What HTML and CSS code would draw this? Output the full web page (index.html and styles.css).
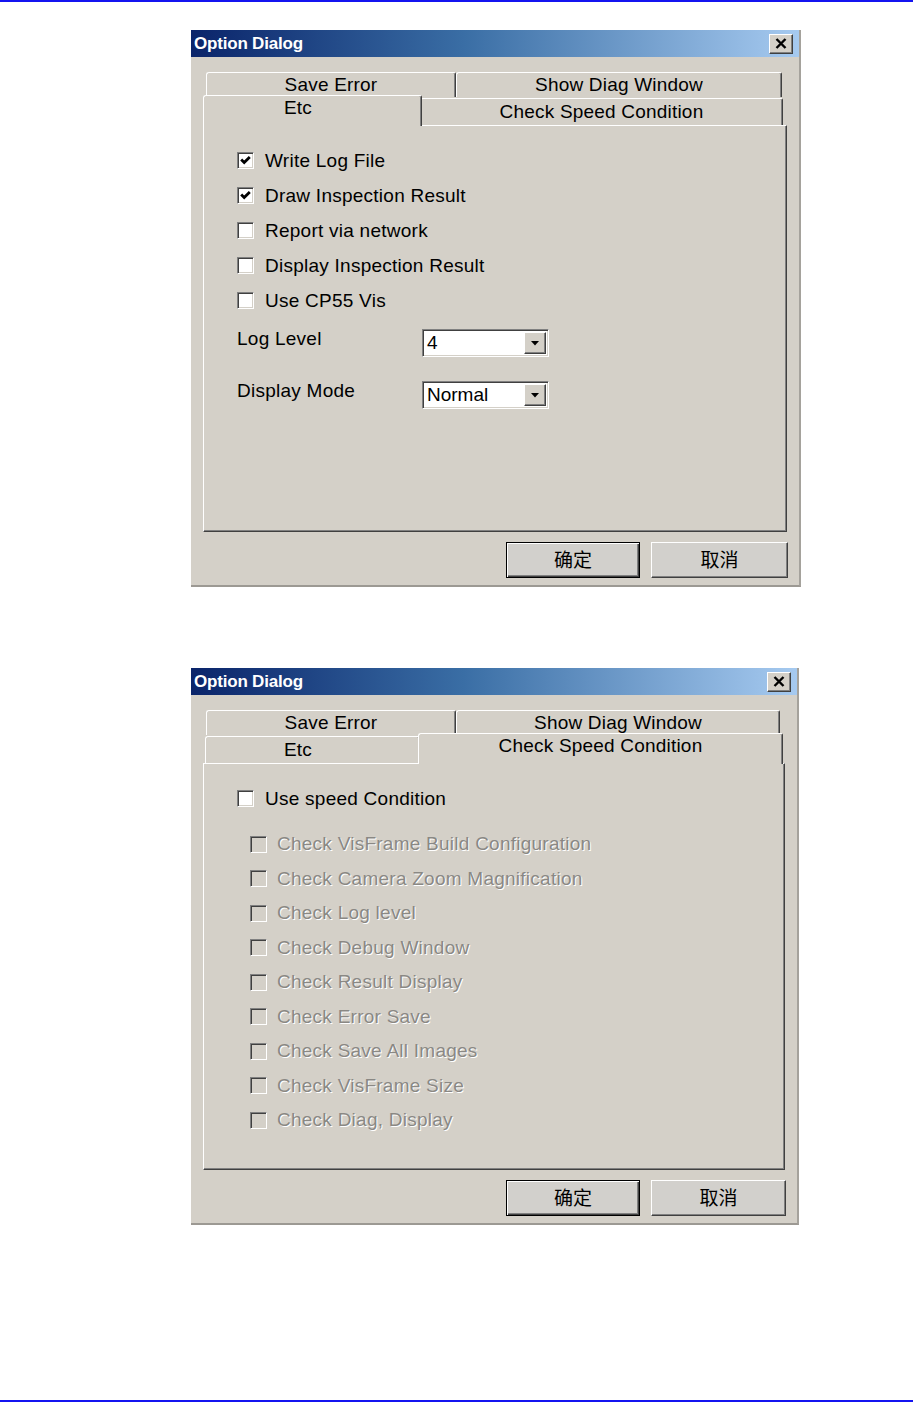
FILE: index.html
```html
<!DOCTYPE html>
<html lang="en">
<head>
<meta charset="utf-8">
<title>Option Dialog</title>
<link rel="stylesheet" href="styles.css">
</head>
<body>
<div class="rule"></div>
<main class="page">
  <section class="dialog">
    <header class="titlebar">
      <span class="title">Option Dialog</span>
      <span class="close"><svg width="12" height="11" viewBox="0 0 12 11"><path d="M1.5 1 L10.5 10 M10.5 1 L1.5 10" stroke="#000" stroke-width="2.4" fill="none"/></svg></span>
    </header>
    <div class="body">
      <div class="tabs">
        <div class="tabrow tabrow--back">
          <div class="tab tab--save">Save Error</div>
          <div class="tab tab--grow">Show Diag Window</div>
        </div>
        <div class="tabrow tabrow--front">
          <div class="tab tab--etc tab--active">Etc</div>
          <div class="tab tab--grow">Check Speed Condition</div>
        </div>
      </div>
      <div class="panel">
        <div class="check"><span class="cb"><svg width="15" height="15" viewBox="0 0 15 15"><path d="M3.2 6.6 L6.2 9.6 L11.8 4" stroke="#000" stroke-width="2.8" fill="none"/></svg></span><span>Write Log File</span></div>
        <div class="check"><span class="cb"><svg width="15" height="15" viewBox="0 0 15 15"><path d="M3.2 6.6 L6.2 9.6 L11.8 4" stroke="#000" stroke-width="2.8" fill="none"/></svg></span><span>Draw Inspection Result</span></div>
        <div class="check"><span class="cb"></span><span>Report via network</span></div>
        <div class="check"><span class="cb"></span><span>Display Inspection Result</span></div>
        <div class="check"><span class="cb"></span><span>Use CP55 Vis</span></div>
        <div class="form">
          <span class="form-label">Log Level</span>
          <div class="combo"><span class="combo-value">4</span><span class="combo-btn"><svg width="8" height="5" viewBox="0 0 8 5"><path d="M0 0 H8 L4 4.5 Z" fill="#000"/></svg></span></div>
          <span class="form-label">Display Mode</span>
          <div class="combo"><span class="combo-value">Normal</span><span class="combo-btn"><svg width="8" height="5" viewBox="0 0 8 5"><path d="M0 0 H8 L4 4.5 Z" fill="#000"/></svg></span></div>
        </div>
      </div>
      <div class="actions">
        <button class="btn btn--default">确定</button>
        <button class="btn btn--cancel">取消</button>
      </div>
    </div>
  </section>

  <section class="dialog dialog--second">
    <header class="titlebar">
      <span class="title">Option Dialog</span>
      <span class="close"><svg width="12" height="11" viewBox="0 0 12 11"><path d="M1.5 1 L10.5 10 M10.5 1 L1.5 10" stroke="#000" stroke-width="2.4" fill="none"/></svg></span>
    </header>
    <div class="body">
      <div class="tabs">
        <div class="tabrow tabrow--back">
          <div class="tab tab--save">Save Error</div>
          <div class="tab tab--grow">Show Diag Window</div>
        </div>
        <div class="tabrow tabrow--front">
          <div class="tab tab--etc">Etc</div>
          <div class="tab tab--grow tab--active">Check Speed Condition</div>
        </div>
      </div>
      <div class="panel">
        <div class="check"><span class="cb"></span><span>Use speed Condition</span></div>
        <div class="sublist">
          <div class="check check--sub"><span class="cb cb--disabled"></span><span class="disabled">Check VisFrame Build Configuration</span></div>
          <div class="check check--sub"><span class="cb cb--disabled"></span><span class="disabled">Check Camera Zoom Magnification</span></div>
          <div class="check check--sub"><span class="cb cb--disabled"></span><span class="disabled">Check Log level</span></div>
          <div class="check check--sub"><span class="cb cb--disabled"></span><span class="disabled">Check Debug Window</span></div>
          <div class="check check--sub"><span class="cb cb--disabled"></span><span class="disabled">Check Result Display</span></div>
          <div class="check check--sub"><span class="cb cb--disabled"></span><span class="disabled">Check Error Save</span></div>
          <div class="check check--sub"><span class="cb cb--disabled"></span><span class="disabled">Check Save All Images</span></div>
          <div class="check check--sub"><span class="cb cb--disabled"></span><span class="disabled">Check VisFrame Size</span></div>
          <div class="check check--sub"><span class="cb cb--disabled"></span><span class="disabled">Check Diag, Display</span></div>
        </div>
      </div>
      <div class="actions">
        <button class="btn btn--default">确定</button>
        <button class="btn btn--cancel">取消</button>
      </div>
    </div>
  </section>
</main>
<div class="rule rule--bottom"></div>
</body>
</html>
```

FILE: styles.css
```css
html, body {
  margin: 0;
  padding: 0;
}

body {
  background: #ffffff;
  height: 1402px;
  display: flex;
  flex-direction: column;
  font-family: "Liberation Sans", Arial, "Noto Sans CJK SC", sans-serif;
  color: #000;
  overflow: hidden;
}

.rule {
  height: 2px;
  background: #1414f0;
  flex: none;
}

.rule--bottom {
  margin-top: auto;
}

.page {
  padding: 28px 0 0 191px;
  display: flex;
  flex-direction: column;
}

.dialog {
  width: 610px;
  height: 557px;
  box-sizing: border-box;
  background: #d4d0c8;
  border-right: 2px solid #a5a29c;
  border-bottom: 2px solid #9c9993;
  display: flex;
  flex-direction: column;
}

.dialog--second {
  width: 608px;
  margin-top: 81px;
}

.titlebar {
  height: 27px;
  flex: none;
  display: flex;
  align-items: center;
  justify-content: space-between;
  background: linear-gradient(to right, #0a246a 0%, #3a6ea5 45%, #a6caf0 100%);
}

.title {
  color: #fff;
  font-weight: bold;
  font-size: 17px;
  padding-left: 3px;
  letter-spacing: -0.2px;
}

.close {
  width: 24px;
  height: 20px;
  margin-right: 6px;
  box-sizing: border-box;
  background: #d4d0c8;
  border-top: 1px solid #ffffff;
  border-left: 1px solid #ffffff;
  border-right: 1px solid #404040;
  border-bottom: 1px solid #404040;
  box-shadow: inset -1px -1px 0 #808080;
  display: flex;
  align-items: center;
  justify-content: center;
}

.body {
  flex: 1;
  padding: 15px 12px 7px 12px;
  display: flex;
  flex-direction: column;
}

.tabs {
  display: flex;
  flex-direction: column;
}

.tabrow {
  display: flex;
}

.tabrow--back {
  height: 25px;
  margin: 0 5px 0 3px;
}

.tabrow--front {
  height: 28px;
  margin: 0 4px 0 2px;
  align-items: flex-end;
}

.tab {
  box-sizing: border-box;
  height: 100%;
  display: flex;
  align-items: center;
  justify-content: center;
  font-size: 19px;
  line-height: 22px;
  letter-spacing: 0.2px;
  border-top: 1px solid #ffffff;
  border-left: 1px solid #ffffff;
  border-right: 1px solid #404040;
  box-shadow: inset -1px 0 0 #808080;
  border-top-left-radius: 3px;
  border-top-right-radius: 2px;
  background: #d4d0c8;
  white-space: nowrap;
}

.tabrow--front .tab {
  height: 27px;
}

.tab--save {
  width: 250px;
}

.tab--grow {
  flex: 1;
}

.tab--etc {
  width: 215px;
  padding-right: 29px;
}

.tabrow--front .tab--active {
  height: 31px;
  margin: 0 -2px -1px -2px;
  position: relative;
  z-index: 1;
  align-items: flex-start;
  padding-top: 1px;
}

.tabrow--front .tab--etc.tab--active {
  width: 219px;
}

.panel {
  height: 407px;
  box-sizing: border-box;
  border-top: 1px solid #ffffff;
  border-left: 1px solid #ffffff;
  border-right: 1px solid #404040;
  border-bottom: 1px solid #404040;
  box-shadow: inset -1px -1px 0 #808080;
  padding: 17px 0 0 33px;
  flex: none;
}

.check {
  height: 35px;
  display: flex;
  align-items: center;
  gap: 11px;
  font-size: 19px;
  letter-spacing: 0.25px;
  white-space: nowrap;
}

.sublist {
  margin-top: 11px;
}

.check--sub {
  height: 34.5px;
  padding-left: 13px;
  gap: 10px;
}

.cb {
  width: 17px;
  height: 17px;
  flex: none;
  box-sizing: border-box;
  background: #ffffff;
  border-top: 1px solid #808080;
  border-left: 1px solid #808080;
  border-right: 1px solid #ffffff;
  border-bottom: 1px solid #ffffff;
  box-shadow: inset 1px 1px 0 #404040, inset -1px -1px 0 #d4d0c8;
  display: flex;
}

.cb svg {
  display: block;
}

.cb--disabled {
  background: #d4d0c8;
}

.disabled {
  color: #8a8884;
  text-shadow: 1px 1px 0 #ffffff;
}

.form {
  margin-top: 11px;
  display: grid;
  grid-template-columns: 185px 127px;
  row-gap: 24px;
}

.form-label {
  font-size: 19px;
  line-height: 20px;
  letter-spacing: 0.25px;
}

.combo {
  height: 28px;
  box-sizing: border-box;
  background: #fff;
  border-top: 1px solid #808080;
  border-left: 1px solid #808080;
  border-right: 1px solid #ffffff;
  border-bottom: 1px solid #ffffff;
  box-shadow: inset 1px 1px 0 #404040, inset -1px -1px 0 #d4d0c8;
  display: flex;
  padding: 2px;
}

.combo-value {
  flex: 1;
  font-size: 19px;
  line-height: 22px;
  padding-left: 2px;
}

.combo-btn {
  width: 22px;
  box-sizing: border-box;
  background: #d4d0c8;
  border-top: 1px solid #ffffff;
  border-left: 1px solid #ffffff;
  border-right: 1px solid #404040;
  border-bottom: 1px solid #404040;
  box-shadow: inset -1px -1px 0 #808080;
  display: flex;
  align-items: center;
  justify-content: center;
}

.actions {
  margin: 10px -1px 0 0;
  display: flex;
  justify-content: flex-end;
  gap: 11px;
}

.btn {
  height: 36px;
  margin: 0;
  padding: 0 0 4px 0;
  box-sizing: border-box;
  background: #d2d0cc;
  font-family: "Noto Sans CJK SC", "Liberation Sans", sans-serif;
  font-size: 19px;
  color: #000;
  line-height: 1;
}

.btn--default {
  width: 134px;
  border: 1px solid #000;
  box-shadow: inset 1px 1px 0 #ffffff, inset -1px -1px 0 #404040, inset -2px -2px 0 #808080;
}

.btn--cancel {
  width: 137px;
  border-top: 1px solid #ffffff;
  border-left: 1px solid #ffffff;
  border-right: 1px solid #404040;
  border-bottom: 1px solid #404040;
  box-shadow: inset -1px -1px 0 #808080;
}

.dialog--second .btn--cancel {
  width: 135px;
}
```
